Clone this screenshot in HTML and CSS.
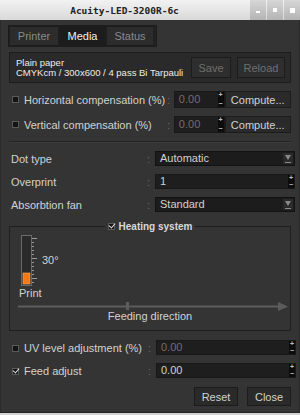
FILE: index.html
```html
<!DOCTYPE html>
<html lang="en">
<head>
    <meta charset="UTF-8">
    <title>Acuity-LED-3200R-6c</title>
    <link rel="stylesheet" href="styles.css">
</head>
<body>
    <div class="titlebar">
        <span class="title">Acuity-LED-3200R-6c</span>
        <div class="wm-buttons">
            <span class="wm-btn"><i class="wm-min"></i></span>
            <span class="wm-btn"><i class="wm-max"></i></span>
            <span class="wm-btn"><i class="wm-close"></i></span>
        </div>
    </div>

    <div class="window">
        <div class="tabs">
            <span class="tab">Printer</span>
            <span class="tab active">Media</span>
            <span class="tab">Status</span>
        </div>

        <div class="media-box">
            <div class="media-text">
                <div>Plain paper</div>
                <div>CMYKcm / 300x600 / 4 pass Bi Tarpauli</div>
            </div>
            <button class="btn save" disabled>Save</button>
            <button class="btn reload" disabled>Reload</button>
        </div>

        <div class="comp-row">
            <span class="check"></span>
            <span class="comp-label">Horizontal compensation (%)</span>
            <span class="colon">:</span>
            <span class="spin disabled"><span class="value">0.00</span><span class="arrows"><b>+</b><b>&minus;</b></span></span>
            <button class="btn compute">Compute...</button>
        </div>
        <div class="comp-row">
            <span class="check"></span>
            <span class="comp-label">Vertical compensation (%)</span>
            <span class="colon">:</span>
            <span class="spin disabled"><span class="value">0.00</span><span class="arrows"><b>+</b><b>&minus;</b></span></span>
            <button class="btn compute">Compute...</button>
        </div>

        <hr class="separator">

        <div class="field-row">
            <span class="field-label">Dot type</span>
            <span class="colon">:</span>
            <span class="combo"><span class="value">Automatic</span><span class="drop"></span></span>
        </div>
        <div class="field-row">
            <span class="field-label">Overprint</span>
            <span class="colon">:</span>
            <span class="spin wide"><span class="value">1</span><span class="arrows"><b>+</b><b>&minus;</b></span></span>
        </div>
        <div class="field-row">
            <span class="field-label">Absorbtion fan</span>
            <span class="colon">:</span>
            <span class="combo"><span class="value">Standard</span><span class="drop"></span></span>
        </div>

        <fieldset class="heating">
            <legend><span class="check checked"></span>Heating system</legend>
            <div class="thermo-row">
                <svg class="thermo" width="17" height="51" viewBox="0 0 17 51">
                    <rect x="0.5" y="0.5" width="10" height="50" fill="#2a2a2a" stroke="#6a6a6a"/>
                    <rect x="2" y="38" width="7" height="11" fill="#f07a1a" stroke="#ffb060" stroke-width="0.6"/>
                    <g stroke="#9a9a9a" stroke-width="1">
                        <line x1="11" y1="3.5" x2="16" y2="3.5"/>
                        <line x1="11" y1="7.5" x2="13" y2="7.5"/>
                        <line x1="11" y1="11.5" x2="13" y2="11.5"/>
                        <line x1="11" y1="15.5" x2="13" y2="15.5"/>
                        <line x1="11" y1="19.5" x2="13" y2="19.5"/>
                        <line x1="11" y1="23.5" x2="16" y2="23.5"/>
                        <line x1="11" y1="27.5" x2="13" y2="27.5"/>
                        <line x1="11" y1="31.5" x2="13" y2="31.5"/>
                        <line x1="11" y1="35.5" x2="13" y2="35.5"/>
                        <line x1="11" y1="39.5" x2="13" y2="39.5"/>
                        <line x1="11" y1="43.5" x2="16" y2="43.5"/>
                        <line x1="11" y1="47.5" x2="13" y2="47.5"/>
                    </g>
                </svg>
                <span class="temp">30°</span>
            </div>
            <div class="print-label">Print</div>
            <svg class="feed-arrow" width="270" height="9" viewBox="0 0 270 9">
                <line x1="0" y1="4.5" x2="262" y2="4.5" stroke="#5c5c5c" stroke-width="2"/>
                <polygon points="260,0 270,4.5 260,9" fill="#5c5c5c"/>
                <rect x="108" y="0" width="3" height="8" fill="#5c5c5c"/>
            </svg>
            <div class="feed-label">Feeding direction</div>
        </fieldset>

        <div class="field-row check-row first-check">
            <span class="field-label"><span class="check"></span>UV level adjustment (%)</span>
            <span class="colon">:</span>
            <span class="spin wide disabled"><span class="value">0.00</span><span class="arrows"><b>+</b><b>&minus;</b></span></span>
        </div>
        <div class="field-row check-row">
            <span class="field-label"><span class="check checked"></span>Feed adjust</span>
            <span class="colon">:</span>
            <span class="spin wide"><span class="value">0.00</span><span class="arrows"><b>+</b><b>&minus;</b></span></span>
        </div>

        <div class="bottom-buttons">
            <button class="btn">Reset</button>
            <button class="btn">Close</button>
        </div>
    </div>
</body>
</html>
```

FILE: styles.css
```css
body {
    margin: 0;
    width: 300px;
    height: 415px;
    background: #d4d4d4;
    font-family: "Liberation Sans", Arial, sans-serif;
    font-size: 11px;
    color: #d2d2d2;
    overflow: hidden;
}
.titlebar {
    height: 20px;
    display: flex;
    align-items: center;
    background: linear-gradient(#f2f2f2, #d9d9d9);
    color: #222;
}
.title {
    flex: 1;
    text-align: center;
    font-family: "DejaVu Sans Mono", monospace;
    font-weight: bold;
    font-size: 9.5px;
}
.wm-buttons {
    display: flex;
    align-self: stretch;
}
.wm-btn {
    width: 16px;
    margin-left: 1px;
    display: flex;
    align-items: center;
    justify-content: center;
    background: linear-gradient(#d6d6d6, #b4b4b4);
}
.wm-btn i {
    display: block;
    background: #fff;
}
.wm-min {
    width: 4px;
    height: 2px;
    margin-top: 4px;
}
.wm-max {
    width: 4px;
    height: 4px;
}
.wm-close {
    width: 5px;
    height: 5px;
}
.window {
    background: #343434;
    height: 387px;
    padding: 5px 8px 0 8px;
    border-left: 1px solid #2a2a2a;
    border-right: 1px solid #2a2a2a;
    border-bottom: 1px solid #262626;
    width: 282px;
}
.tabs {
    display: flex;
    width: 147px;
    margin-left: -1px;
    background: #222;
    border: 1px solid #1c1c1c;
}
.tab {
    height: 18px;
    line-height: 18px;
    text-align: center;
    background: #2c2c2c;
    border: 1px solid #1e1e1e;
    color: #8a8a8a;
}
.tab:nth-child(1) {
    width: 48px;
}
.tab:nth-child(2) {
    width: 45px;
}
.tab:nth-child(3) {
    width: 46px;
}
.tab.active {
    background: #1c1c1c;
    color: #f0f0f0;
}
.media-box {
    margin-top: 5px;
    height: 29px;
    display: flex;
    align-items: center;
    padding: 0 5px 0 6px;
    background: #2a2a2a;
    border: 1px solid #1c1c1c;
}
.media-text {
    flex: 1;
    font-size: 9.5px;
    line-height: 10px;
    color: #ececec;
    padding-top: 1px;
    white-space: nowrap;
}
.btn {
    font-family: "Liberation Sans", Arial, sans-serif;
    font-size: 11px;
    color: #d2d2d2;
    background: #2a2a2a;
    border: 1px solid #1c1c1c;
    height: 19px;
    padding: 0;
}
.btn:disabled {
    color: #6e6e6e;
    background: #2e2e2e;
}
.media-box .btn {
    height: 21px;
}
.media-box .save {
    width: 40px;
}
.media-box .reload {
    width: 48px;
    margin-left: 6px;
}
.check {
    display: inline-block;
    width: 7px;
    height: 7px;
    background: #141414;
    border: 1px solid #5a5a5a;
    box-sizing: border-box;
    position: relative;
}
.check.checked::after {
    content: "";
    position: absolute;
    left: 1px;
    top: -2px;
    width: 3px;
    height: 5px;
    border-right: 1.5px solid #e0e0e0;
    border-bottom: 1.5px solid #e0e0e0;
    transform: rotate(40deg);
}
.comp-row {
    display: flex;
    align-items: center;
    height: 17px;
    margin-top: 8px;
}
.comp-row .check {
    margin-left: 3px;
    margin-right: 5px;
}
.comp-label {
    width: 144px;
}
.colon {
    width: 7px;
    color: #6a6a6a;
}
.spin {
    display: flex;
    align-items: stretch;
    height: 17px;
    background: #1e1e1e;
    border: 1px solid #181818;
    box-sizing: border-box;
}
.comp-row .spin {
    width: 51px;
}
.spin .value {
    flex: 1;
    padding-left: 4px;
    line-height: 15px;
}
.spin.disabled .value {
    color: #6e6e6e;
}
.arrows {
    width: 6px;
    background: #0c0c0c;
    display: flex;
    flex-direction: column;
    justify-content: space-between;
    align-items: center;
    font-size: 7px;
    line-height: 6px;
    color: #c0c0c0;
    font-weight: bold;
}
.arrows b {
    display: block;
}
.compute {
    width: 67px;
    height: 17px;
}
.separator {
    border: 0;
    border-top: 1px solid #222;
    border-bottom: 1px solid #3c3c3c;
    margin: 8px 0 8px 0;
}
.field-row {
    display: grid;
    grid-template-columns: 136px 8px 140px;
    align-items: center;
    height: 15px;
    margin-bottom: 8px;
    padding-left: 2px;
}
.combo {
    display: flex;
    height: 15px;
    background: #1c1c1c;
    border: 1px solid #121212;
    box-sizing: border-box;
}
.combo .value {
    flex: 1;
    padding-left: 4px;
    line-height: 13px;
}
.drop {
    width: 10px;
    margin: 1px;
    background: #2a2a2a;
    position: relative;
}
.drop::before {
    content: "";
    position: absolute;
    left: 2px;
    top: 2px;
    border-left: 3px solid transparent;
    border-right: 3px solid transparent;
    border-top: 5px solid #8a8a8a;
}
.drop::after {
    content: "";
    position: absolute;
    left: 2px;
    top: 9px;
    width: 6px;
    height: 1px;
    background: #8a8a8a;
}
.spin.wide {
    height: 15px;
}
.spin.wide .value {
    line-height: 13px;
}
.heating {
    margin: 9px 0 0 0;
    padding: 0 8px 0 8px;
    border: 1px solid #1f1f1f;
    height: 108px;
    min-width: 0;
}
.heating legend {
    margin: 0 auto;
    padding: 0 3px;
    font-size: 10px;
    font-weight: bold;
    color: #d8d8d8;
    display: flex;
    align-items: center;
    gap: 4px;
}
.thermo-row {
    display: flex;
    align-items: center;
    margin-top: 3px;
    margin-left: 3px;
}
.temp {
    margin-left: 4px;
    margin-top: -2px;
}
.print-label {
    margin-left: 1px;
    margin-top: 1px;
    line-height: 13px;
}
.feed-arrow {
    display: block;
    margin-top: 2px;
}
.feed-label {
    text-align: center;
    line-height: 11px;
}
.check-row {
    padding-left: 3px;
}
.check-row .check {
    margin-right: 5px;
}
.first-check {
    margin-top: 9px;
}
.bottom-buttons {
    display: flex;
    justify-content: flex-end;
    gap: 9px;
    margin-top: 9px;
}
.bottom-buttons .btn {
    width: 44px;
    height: 19px;
}
```
